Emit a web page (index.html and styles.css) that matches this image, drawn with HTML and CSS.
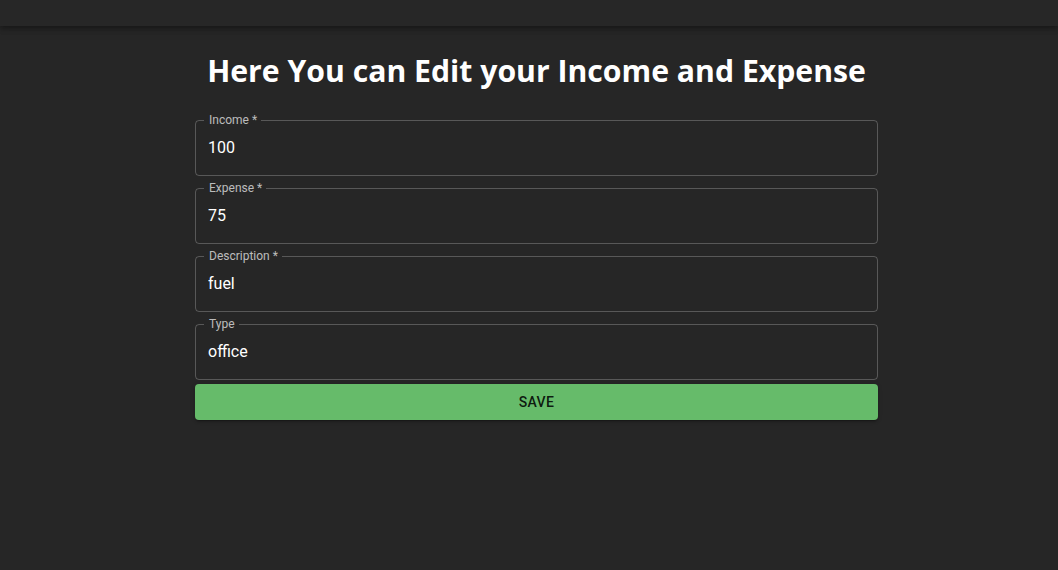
FILE: index.html
```html
<!DOCTYPE html>
<html>
<head>
<meta charset="utf-8">
<link rel="stylesheet" href="styles.css">
</head>
<body>
<header class="appbar"></header>
<main class="page">
  <h1 class="title">Here You can Edit your Income and Expense</h1>
  <form class="form">
    <fieldset class="field">
      <legend class="label">Income *</legend>
      <input class="input" type="text" value="100">
    </fieldset>
    <fieldset class="field">
      <legend class="label">Expense *</legend>
      <input class="input" type="text" value="75">
    </fieldset>
    <fieldset class="field">
      <legend class="label">Description *</legend>
      <input class="input" type="text" value="fuel">
    </fieldset>
    <fieldset class="field">
      <legend class="label">Type</legend>
      <input class="input" type="text" value="office">
    </fieldset>
    <button class="save" type="button">Save</button>
  </form>
</main>
</body>
</html>
```
FILE: styles.css
```css
html, body {
  margin: 0;
  padding: 0;
}
body {
  background: #262626;
  font-family: Roboto, "Liberation Sans", sans-serif;
  color: #fff;
  height: 570px;
  overflow: hidden;
}
.appbar {
  height: 26px;
  background: #272727;
  box-shadow: 0 2px 4px -1px rgba(0,0,0,0.2), 0 4px 5px 0 rgba(0,0,0,0.14), 0 1px 10px 0 rgba(0,0,0,0.12);
}
.page {
  width: 683px;
  margin: 0 auto;
  padding-left: 15px;
}
.title {
  margin: 20px 0 0;
  font-family: "Open Sans", sans-serif;
  font-weight: 700;
  font-size: 30.2px;
  line-height: 50px;
  text-align: center;
  color: #fff;
}
.form {
  display: flex;
  flex-direction: column;
  margin-top: 18px;
}
.field {
  margin: 0 0 6px;
  padding: 0 8px;
  border: 1px solid rgba(255,255,255,0.23);
  border-radius: 4px;
  min-width: 0;
}
.label {
  padding: 0 4px 0 5px;
  font-size: 12px;
  line-height: 12px;
  color: rgba(255,255,255,0.7);
}
.input {
  display: block;
  width: 100%;
  box-sizing: border-box;
  border: 0;
  outline: 0;
  background: transparent;
  color: #fff;
  font-family: Roboto, sans-serif;
  font-size: 16px;
  line-height: 19px;
  height: 49px;
  padding: 1px 4px 7px;
  margin: 0;
}
.field:last-of-type {
  margin-bottom: 4px;
}
.save {
  height: 36px;
  border: 0;
  border-radius: 4px;
  background: #66bb6a;
  color: rgba(0,0,0,0.87);
  font-family: Roboto, sans-serif;
  font-weight: 500;
  font-size: 14px;
  letter-spacing: 0.4px;
  text-transform: uppercase;
  box-shadow: 0 3px 1px -2px rgba(0,0,0,0.2), 0 2px 2px 0 rgba(0,0,0,0.14), 0 1px 5px 0 rgba(0,0,0,0.12);
}
```
